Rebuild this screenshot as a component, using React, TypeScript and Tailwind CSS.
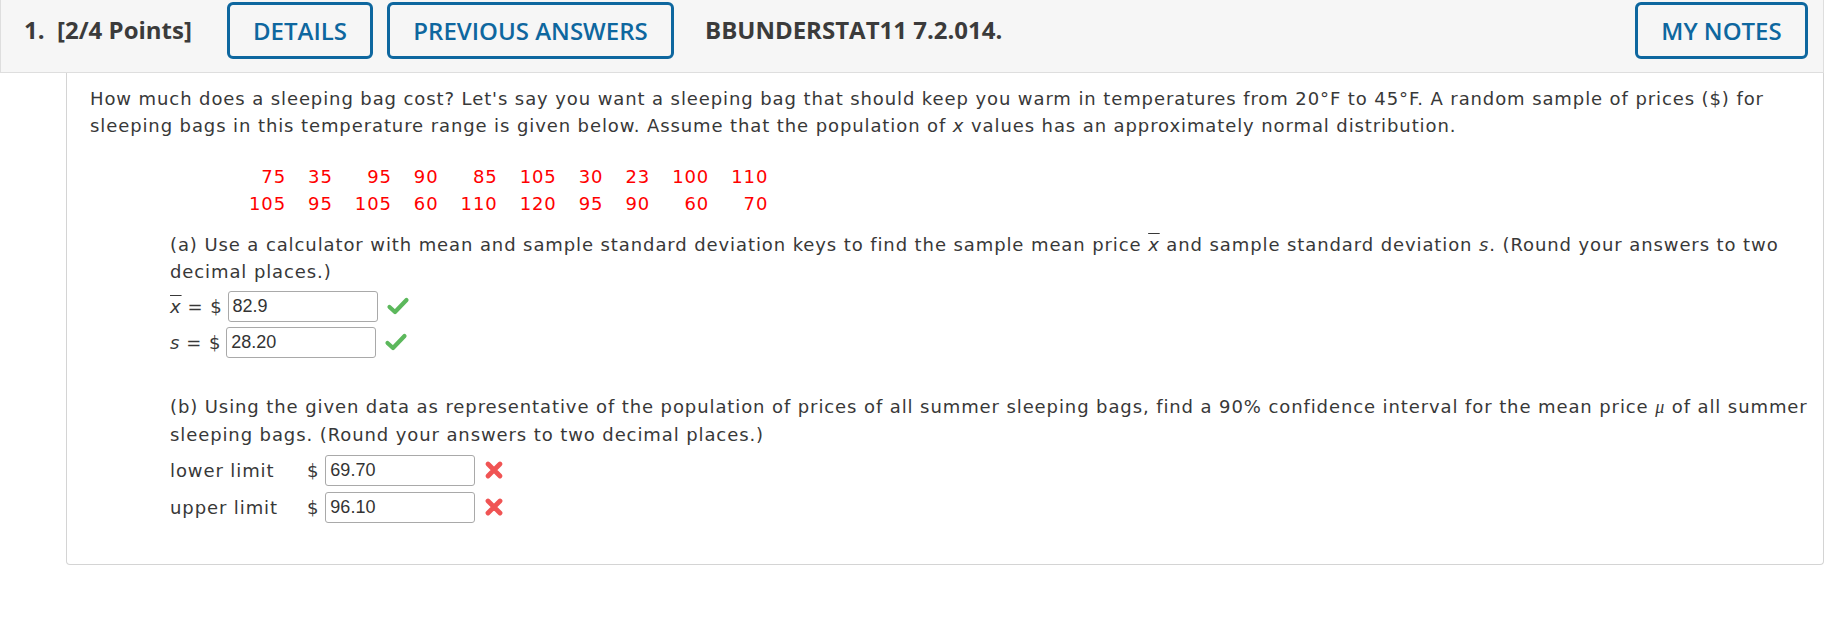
import React from "react";

const ROW1 = ["75", "35", "95", "90", "85", "105", "30", "23", "100", "110"];
const ROW2 = ["105", "95", "105", "60", "110", "120", "95", "90", "60", "70"];

function Check() {
  return (
    <svg width="24" height="22" viewBox="0 0 24 22" className="ml-[8px]">
      <path d="M3.5 12 L9 17 L20.5 5" fill="none" stroke="#5cb85c" strokeWidth="4.2" strokeLinecap="round" strokeLinejoin="round" />
    </svg>
  );
}

function Cross() {
  return (
    <svg width="22" height="22" viewBox="0 0 22 22" className="ml-[8px]">
      <path d="M5 5 L17 17 M17 5 L5 17" fill="none" stroke="#f05454" strokeWidth="4.8" strokeLinecap="round" />
    </svg>
  );
}

function Answer({ value }: { value: string }) {
  return (
    <div className="h-[31px] w-[150px] rounded-[3px] border border-[#a9a9a9] bg-white px-[4px] flex items-center font-[family-name:Liberation_Sans,Arial,sans-serif] text-[18px] tracking-normal text-[#333]">
      {value}
    </div>
  );
}

const HeadBtn = ({ label, w }: { label: string; w: string }) => (
  <button className={`h-[57px] ${w} rounded-[6px] border-[3px] border-[#0e679f] text-[#0e679f] text-[24px] font-semibold flex items-center justify-center`}>
    {label}
  </button>
);

export default function App() {
  return (
    <div className="w-[1835px] h-[639px] bg-white font-[family-name:DejaVu_Sans,Verdana,sans-serif] text-[#383838]">
      {/* header */}
      <div className="w-[1824px] h-[73px] bg-[#f6f6f6] border border-[#dedede] border-t-0 flex items-start pt-[2px] font-[family-name:Open_Sans,sans-serif]">
        <div className="pl-[23px] w-[226px] leading-[56px] text-[24px] font-bold text-[#3b3b3b] whitespace-pre">
          1.  [2/4 Points]
        </div>
        <div className="flex gap-[14px]">
          <HeadBtn label="DETAILS" w="w-[146px]" />
          <HeadBtn label="PREVIOUS ANSWERS" w="w-[287px]" />
        </div>
        <div className="ml-[31px] leading-[56px] text-[24px] font-bold text-[#3b3b3b]">BBUNDERSTAT11 7.2.014.</div>
        <div className="ml-auto mr-[15px]">
          <HeadBtn label="MY NOTES" w="w-[173px]" />
        </div>
      </div>

      {/* question body */}
      <div className="ml-[66px] w-[1758px] h-[492px] border border-t-0 border-[#d4d4d4] rounded-b-[4px] pl-[23px] pr-[12px] pt-[12px] text-[18px] tracking-[0.9px] leading-[27px]">
        <p>
          How much does a sleeping bag cost? Let's say you want a sleeping bag that should keep you warm in temperatures from 20°F to 45°F. A random sample of prices ($) for sleeping bags in this temperature range is given below. Assume that the population of <i>x</i> values has an approximately normal distribution.
        </p>

        <table className="mt-[24px] ml-[148px] text-[#ff0000] border-collapse">
          <tbody>
            {[ROW1, ROW2].map((row, i) => (
              <tr key={i}>
                {row.map((v, j) => (
                  <td key={j} className="text-right px-[11px] py-0 leading-[27px]">{v}</td>
                ))}
              </tr>
            ))}
          </tbody>
        </table>

        <div className="ml-[80px] mt-[14px]">
          <p>
            (a) Use a calculator with mean and sample standard deviation keys to find the sample mean price <span className="overline italic">x</span> and sample standard deviation <i>s</i>. (Round your answers to two decimal places.)
          </p>
          <div className="flex items-center mt-[5px] h-[32px]">
            <span className="overline italic">x</span>
            <span className="ml-[6px]">= $</span>
            <span className="ml-[5px]"><Answer value="82.9" /></span>
            <Check />
          </div>
          <div className="flex items-center mt-[4px] h-[32px]">
            <i>s</i>
            <span className="ml-[6px]">= $</span>
            <span className="ml-[5px]"><Answer value="28.20" /></span>
            <Check />
          </div>

          <p className="mt-[35px]">
            (b) Using the given data as representative of the population of prices of all summer sleeping bags, find a 90% confidence interval for the mean price <i className="font-[family-name:Liberation_Serif,serif]">μ</i> of all summer sleeping bags. (Round your answers to two decimal places.)
          </p>
          <div className="flex items-center mt-[6px] h-[32px]">
            <span className="w-[137px]">lower limit</span>
            <span>$</span>
            <span className="ml-[6px]"><Answer value="69.70" /></span>
            <Cross />
          </div>
          <div className="flex items-center mt-[5px] h-[32px]">
            <span className="w-[137px]">upper limit</span>
            <span>$</span>
            <span className="ml-[6px]"><Answer value="96.10" /></span>
            <Cross />
          </div>
        </div>
      </div>
    </div>
  );
}
